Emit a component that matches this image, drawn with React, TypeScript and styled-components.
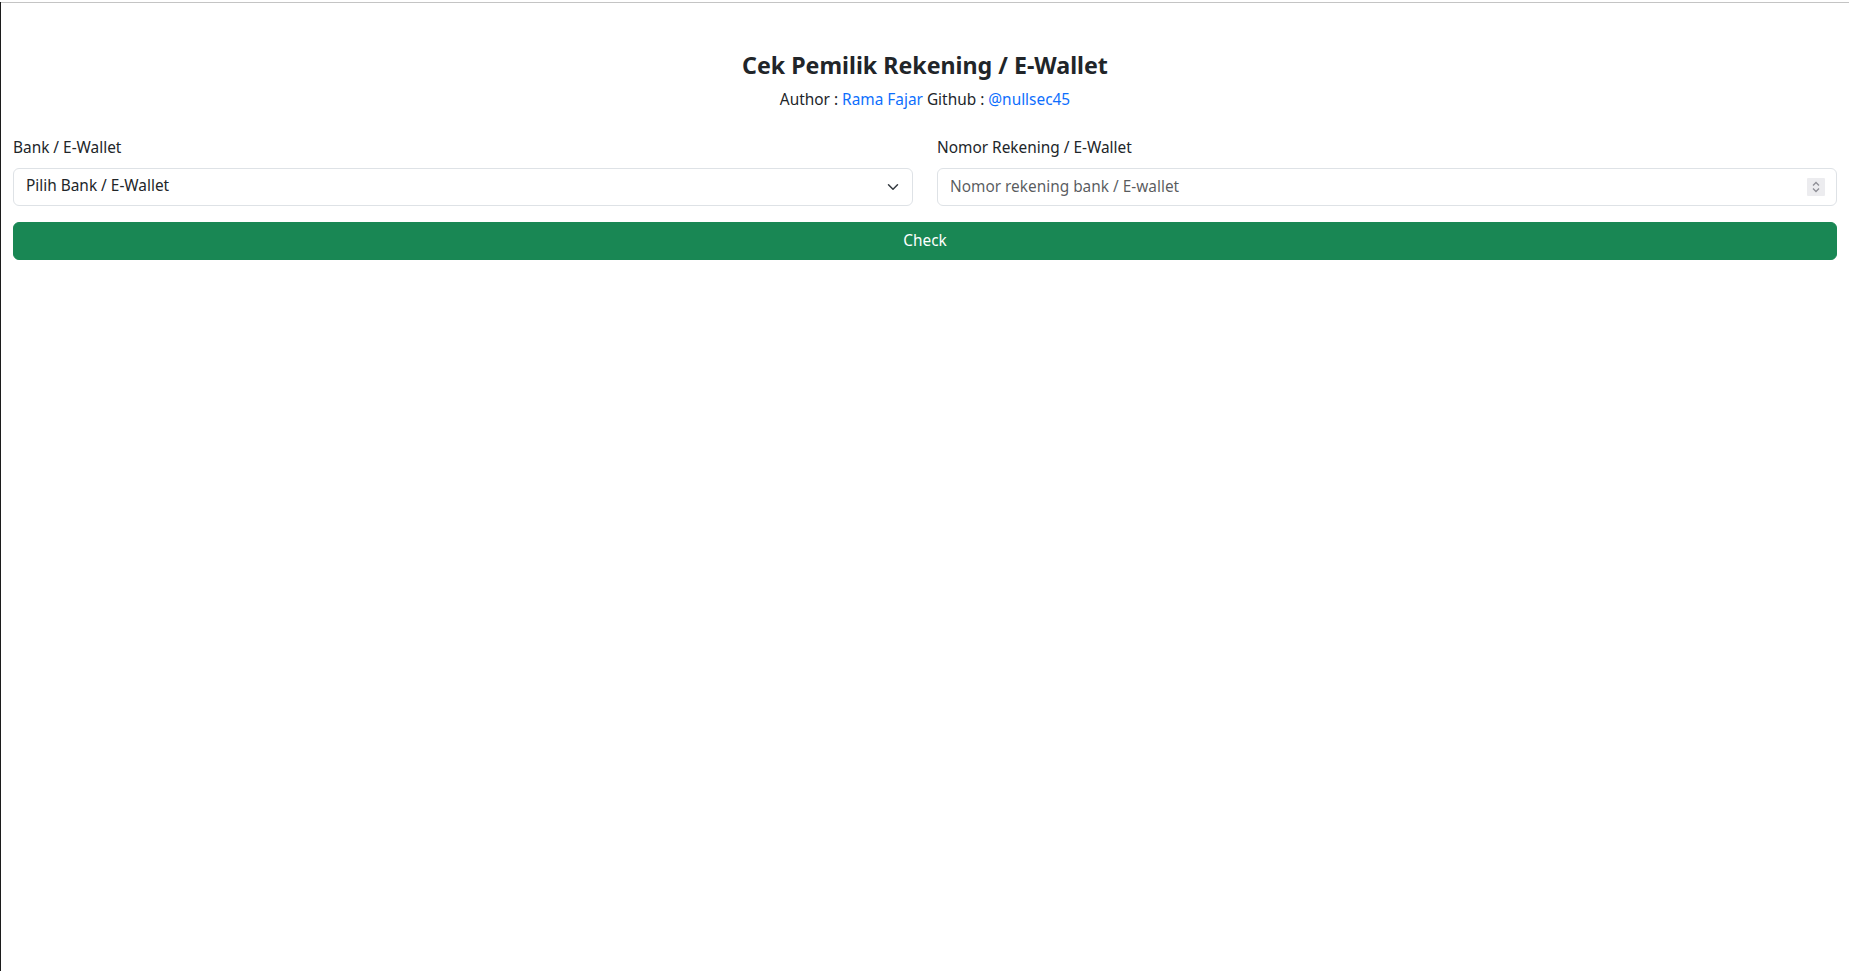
import React from "react";
import styled, { createGlobalStyle } from "styled-components";

const GlobalStyle = createGlobalStyle`
  *, *::before, *::after { box-sizing: border-box; }
  html, body { margin: 0; padding: 0; background: #ffffff; }
  body {
    font-family: "Noto Sans", "Open Sans", "DejaVu Sans", sans-serif;
    font-size: 15.4px;
    line-height: 24px;
    color: #212529;
  }
`;

const Page = styled.div`
  min-height: 100vh;
  border-left: 1px solid #1c1c1c;
`;

const TopRule = styled.div`
  margin-top: 2px;
  height: 1px;
  background: #c4c4c4;
`;

const Container = styled.main`
  padding: 0 12px;
`;

const Header = styled.header`
  margin-top: 47px;
  text-align: center;
`;

const Title = styled.h1`
  margin: 0;
  font-size: 23.2px;
  line-height: 30px;
  font-weight: 700;
  color: #212529;
`;

const Byline = styled.p`
  margin: 8px 0 0;
  font-size: 15.4px;
  line-height: 24px;
`;

const Link = styled.a`
  color: #0d6efd;
  text-decoration: none;
`;

const Form = styled.form`
  margin-top: 24px;
  display: flex;
  flex-direction: column;
  gap: 16px;
`;

const FieldRow = styled.div`
  display: grid;
  grid-template-columns: 1fr 1fr;
  column-gap: 24px;
`;

const Field = styled.div`
  display: flex;
  flex-direction: column;
  gap: 8px;
`;

const Label = styled.label`
  font-size: 15.4px;
  line-height: 24px;
  color: #212529;
`;

const ControlWrap = styled.div`
  position: relative;
`;

const controlBase = `
  display: block;
  width: 100%;
  height: 38px;
  padding: 5px 12px 7px;
  font-family: inherit;
  font-size: 15.4px;
  line-height: 24px;
  color: #212529;
  background: #ffffff;
  border: 1px solid #dee2e6;
  border-radius: 6px;
  outline: none;
`;

const Select = styled.select`
  ${controlBase}
  padding-right: 36px;
  appearance: none;
  -webkit-appearance: none;
`;

const Input = styled.input`
  ${controlBase}
  padding-right: 40px;
  appearance: textfield;
  -moz-appearance: textfield;
  &::-webkit-outer-spin-button,
  &::-webkit-inner-spin-button {
    -webkit-appearance: none;
    margin: 0;
  }
  &::placeholder {
    color: rgba(33, 37, 41, 0.75);
    opacity: 1;
  }
`;

const Chevron = styled.svg`
  position: absolute;
  right: 12px;
  top: 13px;
  width: 16px;
  height: 12px;
  pointer-events: none;
`;

const Spinner = styled.div`
  position: absolute;
  right: 12px;
  top: 10px;
  width: 18px;
  height: 18px;
  background: #ececef;
  border-radius: 1px;
  display: flex;
  align-items: center;
  justify-content: center;
  pointer-events: none;
`;

const CheckButton = styled.button`
  display: block;
  width: 100%;
  height: 38px;
  padding: 6px 12px;
  font-family: inherit;
  font-size: 15.4px;
  line-height: 24px;
  color: #ffffff;
  background: #198754;
  border: 1px solid #198754;
  border-radius: 6px;
  cursor: pointer;
`;

export default function App() {
  return (
    <>
      <GlobalStyle />
      <Page>
        <TopRule />
        <Container>
          <Header>
            <Title>Cek Pemilik Rekening / E-Wallet</Title>
            <Byline>
              Author : <Link href="#">Rama Fajar</Link> Github :{" "}
              <Link href="#">@nullsec45</Link>
            </Byline>
          </Header>
          <Form onSubmit={(e) => e.preventDefault()}>
            <FieldRow>
              <Field>
                <Label htmlFor="bank">Bank / E-Wallet</Label>
                <ControlWrap>
                  <Select id="bank" defaultValue="">
                    <option value="">Pilih Bank / E-Wallet</option>
                  </Select>
                  <Chevron viewBox="0 0 16 16" preserveAspectRatio="xMidYMid meet">
                    <path
                      d="m2 5 6 6 6-6"
                      fill="none"
                      stroke="#343a40"
                      strokeWidth="2"
                      strokeLinecap="round"
                      strokeLinejoin="round"
                    />
                  </Chevron>
                </ControlWrap>
              </Field>
              <Field>
                <Label htmlFor="nomor">Nomor Rekening / E-Wallet</Label>
                <ControlWrap>
                  <Input id="nomor" type="number" placeholder="Nomor rekening bank / E-wallet" />
                  <Spinner>
                    <svg width="10" height="14" viewBox="0 0 10 14">
                      <path d="M2 5.5 5 2.5 8 5.5" fill="none" stroke="#8e8e96" strokeWidth="1.3" />
                      <path d="M2 8.5 5 11.5 8 8.5" fill="none" stroke="#8e8e96" strokeWidth="1.3" />
                    </svg>
                  </Spinner>
                </ControlWrap>
              </Field>
            </FieldRow>
            <CheckButton type="submit">Check</CheckButton>
          </Form>
        </Container>
      </Page>
    </>
  );
}
